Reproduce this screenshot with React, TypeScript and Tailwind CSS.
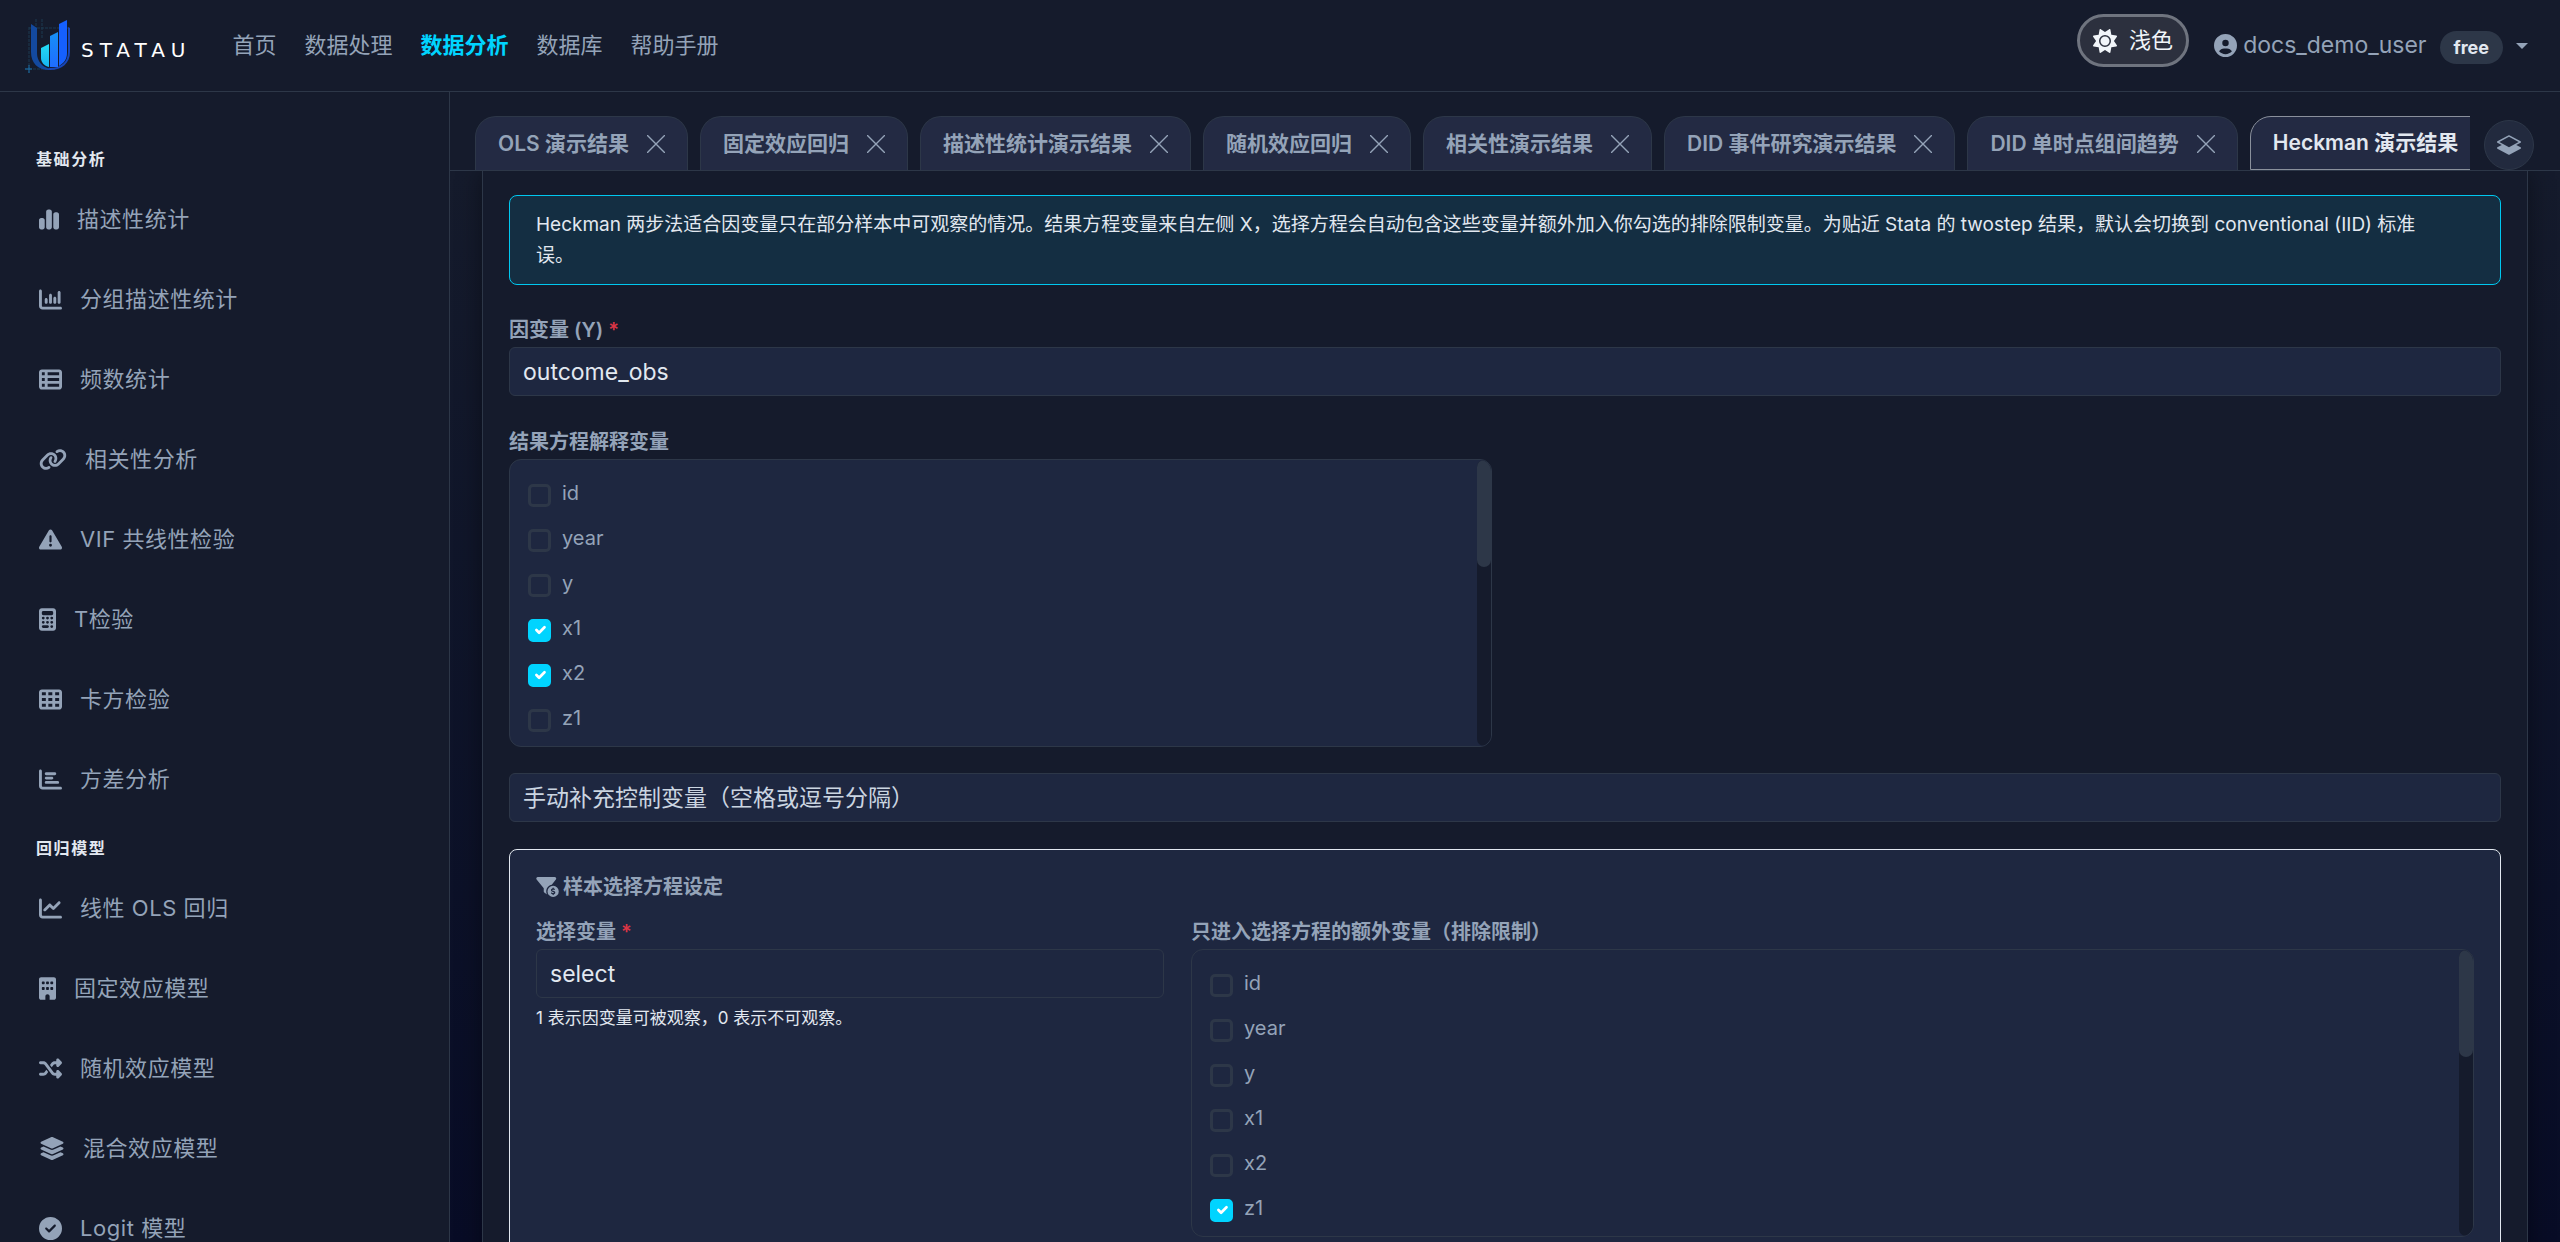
import type { ReactNode } from "react";
import type { IconType } from "react-icons";
import {
  FaBuilding,
  FaCalculator,
  FaChartBar,
  FaChartColumn,
  FaChartLine,
  FaChartSimple,
  FaCircleCheck,
  FaCircleUser,
  FaFilterCircleDollar,
  FaLayerGroup,
  FaLink,
  FaShuffle,
  FaSun,
  FaTableCells,
  FaTableList,
  FaTriangleExclamation,
} from "react-icons/fa6";
import { BsLayersHalf } from "react-icons/bs";

interface MenuItem {
  label: string;
  icon: IconType;
  width: string;
}

interface MenuGroup {
  title: string;
  items: MenuItem[];
}

const navLinks = ["首页", "数据处理", "数据分析", "数据库", "帮助手册"];
const activeNav = "数据分析";

// 图标宽度随各自的 viewBox 比例变化
const menuGroups: MenuGroup[] = [
  {
    title: "基础分析",
    items: [
      { label: "描述性统计", icon: FaChartSimple, width: "w-[20px]" },
      { label: "分组描述性统计", icon: FaChartColumn, width: "w-[23px]" },
      { label: "频数统计", icon: FaTableList, width: "w-[23px]" },
      { label: "相关性分析", icon: FaLink, width: "w-[28px]" },
      { label: "VIF 共线性检验", icon: FaTriangleExclamation, width: "w-[23px]" },
      { label: "T检验", icon: FaCalculator, width: "w-[17px]" },
      { label: "卡方检验", icon: FaTableCells, width: "w-[23px]" },
      { label: "方差分析", icon: FaChartBar, width: "w-[23px]" },
    ],
  },
  {
    title: "回归模型",
    items: [
      { label: "线性 OLS 回归", icon: FaChartLine, width: "w-[23px]" },
      { label: "固定效应模型", icon: FaBuilding, width: "w-[17px]" },
      { label: "随机效应模型", icon: FaShuffle, width: "w-[23px]" },
      { label: "混合效应模型", icon: FaLayerGroup, width: "w-[26px]" },
      { label: "Logit 模型", icon: FaCircleCheck, width: "w-[23px]" },
    ],
  },
];

const tabs = [
  "OLS 演示结果",
  "固定效应回归",
  "描述性统计演示结果",
  "随机效应回归",
  "相关性演示结果",
  "DID 事件研究演示结果",
  "DID 单时点组间趋势",
  "Heckman 演示结果",
];
const activeTab = "Heckman 演示结果";

const variables = ["id", "year", "y", "x1", "x2", "z1"];

function Logo() {
  return (
    <a href="#" className="flex items-center gap-2.5">
      <svg viewBox="0 0 46 54" className="h-[54px] w-[46px]" aria-hidden="true">
        <defs>
          <linearGradient id="barCyan" x1="0" y1="0" x2="0" y2="1">
            <stop offset="0" stopColor="#25dcf5" />
            <stop offset="1" stopColor="#16b4f2" />
          </linearGradient>
          <linearGradient id="barBlue" x1="0" y1="0" x2="0" y2="1">
            <stop offset="0" stopColor="#1790f5" />
            <stop offset="1" stopColor="#1f6cff" />
          </linearGradient>
        </defs>
        <path d="M4 8v46M0 50h30M11 0v20M17 0v20M4 9h40" stroke="#1c3a50" strokeDasharray="3 1" fill="none" />
        <path d="M6 5l6 4v25c0 8 5 14 13 16l-1 1C13 51 6 44 6 33z" fill="#13499f" />
        <path d="M43 8l2 1v24c0 11-8 18-20 18l-3-1 3-1c11 0 18-6 18-16z" fill="#1746b8" />
        <path d="M16 29l8-4v23c-5-1-8-5-8-9z" fill="url(#barCyan)" />
        <path d="M25 17l8-4v35h-8z" fill="url(#barBlue)" />
        <path d="M34 5l8-4v33c0 6-3 10-8 13z" fill="#1560ff" />
        <path d="M4 46v8M0 50h7" stroke="#1b6fa8" fill="none" />
      </svg>
      <span className="mt-[8px] font-['DejaVu_Sans',sans-serif] text-[20px] leading-none tracking-[0.3em] text-white">
        STATAU
      </span>
    </a>
  );
}

function Header() {
  return (
    <header className="flex h-[92px] shrink-0 items-center border-b border-[#2d3748] bg-[#151b2c] pr-8 pl-[25px]">
      <Logo />
      <nav className="mb-[2px] ml-[41px] flex gap-7 text-[22px] leading-[34px]">
        {navLinks.map((link) => (
          <a
            key={link}
            href="#"
            className={link === activeNav ? "font-semibold text-[#00d4ff]" : "text-[#94a3b8]"}
          >
            {link}
          </a>
        ))}
      </nav>
      <div className="ml-auto flex items-center">
        <button
          type="button"
          className="mb-[10px] flex h-[53px] items-center gap-3 rounded-full border-[3px] border-[#6f747f] bg-[#2c303e] px-[13px] text-[22px] text-[#f1f5f9]"
        >
          <FaSun className="h-6 w-6" />
          浅色
        </button>
        <button type="button" className="ml-[25px] flex items-center text-[23px] text-[#94a3b8]">
          <FaCircleUser className="h-[23px] w-[23px]" />
          <span className="ml-[6px]">docs_demo_user</span>
          <span className="mt-[4px] ml-[13px] rounded-full bg-[#2d3748] px-[14px] text-[18px] leading-[33px] font-bold text-[#e2e8f0]">
            free
          </span>
          <svg viewBox="0 0 12 6" className="ml-[13px] h-[6px] w-[12px]" fill="currentColor" aria-hidden="true">
            <path d="M0 0h12L6 6z" />
          </svg>
        </button>
      </div>
    </header>
  );
}

function Sidebar() {
  return (
    <aside className="w-[450px] shrink-0 overflow-hidden border-r border-[#2d3748] bg-[#151b2c] pt-[55px]">
      {menuGroups.map((group) => (
        <section key={group.title} className="mb-[17px]">
          <h2 className="px-9 text-[16px] leading-6 font-bold tracking-widest text-[#e2e8f0]">{group.title}</h2>
          <ul className="pt-2">
            {group.items.map(({ label, icon: Icon, width }) => (
              <li key={label}>
                <a href="#" className="flex h-20 items-center gap-[18px] px-[39px] text-[22px] tracking-wide text-[#94a3b8]">
                  <Icon className={`h-[23px] ${width}`} />
                  {label}
                </a>
              </li>
            ))}
          </ul>
        </section>
      ))}
    </aside>
  );
}

function CloseIcon() {
  return (
    <svg viewBox="0 0 18 18" className="h-[18px] w-[18px]" stroke="currentColor" strokeWidth="1.4" aria-hidden="true">
      <path d="M0 0l18 18M18 0L0 18" />
    </svg>
  );
}

function TabBar() {
  return (
    <div className="flex h-[79px] shrink-0 items-end border-b border-[#2d3748] bg-[#151b2c] pr-[26px] pl-[25px]">
      <div className="flex min-w-0 flex-1 gap-3 overflow-hidden">
        {tabs.map((tab) => (
          <div
            key={tab}
            className={
              tab === activeTab
                ? "flex h-[54px] shrink-0 items-center gap-[18px] rounded-t-[21px] border border-[#8a909c] bg-[#232a43] px-[22px] text-[#e2e8f0]"
                : "flex h-[54px] shrink-0 items-center gap-[18px] rounded-t-[21px] border border-b-0 border-[#2d3748] bg-[#232a43] px-[22px] text-[#94a3b8]"
            }
          >
            <button type="button" className="text-[21px] font-semibold whitespace-nowrap">
              {tab}
            </button>
            <button type="button" aria-label={`关闭 ${tab}`}>
              <CloseIcon />
            </button>
          </div>
        ))}
      </div>
      <button
        type="button"
        aria-label="全部标签"
        className="ml-[14px] flex h-[50px] w-[50px] items-center justify-center rounded-full border border-[#2d3748] bg-[#222a3e] text-[#94a3b8]"
      >
        <BsLayersHalf className="h-6 w-6" />
      </button>
    </div>
  );
}

function FieldLabel({ htmlFor, required, children }: { htmlFor?: string; required?: boolean; children: ReactNode }) {
  return (
    <label htmlFor={htmlFor} className="block text-[20px] leading-[34px] font-semibold text-[#94a3b8]">
      {children}
      {required && <span className="text-[#dc3545]"> *</span>}
    </label>
  );
}

function VariableList({ name, checked }: { name: string; checked: string[] }) {
  return (
    <div className="flex h-[288px] overflow-hidden rounded-xl border border-[#2d3748] bg-[#1e2740]">
      <ul className="min-w-0 flex-1 pt-3 pl-[18px]">
        {variables.map((variable) => (
          <li key={variable} className="h-[45px] pt-[6px]">
            <label className="flex items-center gap-[11px] text-[20px] leading-[30px] text-[#94a3b8]">
              <span className="relative mt-[4px] flex h-[23px] w-[23px]">
                <input
                  type="checkbox"
                  name={name}
                  value={variable}
                  defaultChecked={checked.includes(variable)}
                  className="peer h-[23px] w-[23px] appearance-none rounded-[5px] border-[3px] border-[#2d3748] checked:border-[#00d4ff] checked:bg-[#00d4ff]"
                />
                <svg
                  viewBox="0 0 20 20"
                  className="pointer-events-none absolute inset-0 m-auto hidden h-[18px] w-[18px] peer-checked:block"
                  fill="none"
                  stroke="#fff"
                  strokeWidth="3"
                  strokeLinecap="round"
                  strokeLinejoin="round"
                  aria-hidden="true"
                >
                  <path d="M6 10l3 3 6-6" />
                </svg>
              </span>
              {variable}
            </label>
          </li>
        ))}
      </ul>
      <div className="w-[14px] rounded-full bg-[#151b2c]">
        <div className="h-[107px] rounded-full bg-[#2d3748]" />
      </div>
    </div>
  );
}

const inputClass =
  "block h-[49px] w-full rounded-[6px] border border-[#2d3748] bg-[#1e2740] px-[13px] text-[23px] text-[#e2e8f0] placeholder:text-[#cbd5e1] outline-none";

function HeckmanForm() {
  return (
    <form className="mx-8 grow border-x border-[#2d3748] bg-[#151b2c] px-[26px] pt-6 shadow-[0_0_24px_rgba(0,0,0,0.4)]">
      <p className="rounded-lg border border-[#00c8f0] bg-[#142e42] pt-[13px] pr-12 pb-[13px] pl-[26px] text-[19px] leading-[31px] text-[#e2e8f0]">
        Heckman 两步法适合因变量只在部分样本中可观察的情况。结果方程变量来自左侧
        X，选择方程会自动包含这些变量并额外加入你勾选的排除限制变量。为贴近 Stata 的 twostep 结果，默认会切换到
        conventional (IID) 标准误。
      </p>

      <div className="mt-[28px]">
        <FieldLabel htmlFor="outcome" required>
          因变量 (Y)
        </FieldLabel>
        <input id="outcome" type="text" defaultValue="outcome_obs" className={inputClass} />
      </div>

      <div className="mt-[29px] grid grid-cols-2 gap-[27px]">
        <div>
          <FieldLabel>结果方程解释变量</FieldLabel>
          <VariableList name="outcome-vars" checked={["x1", "x2"]} />
        </div>
      </div>

      <input
        type="text"
        aria-label="手动补充控制变量"
        placeholder="手动补充控制变量（空格或逗号分隔）"
        className={`${inputClass} mt-[26px]`}
      />

      {/* 样本选择方程 */}
      <section className="mt-[27px] h-[480px] rounded-lg border border-[#e2e8f0] bg-[#1e2740] px-[26px] pt-[22px]">
        <h3 className="flex items-center gap-1 text-[20px] leading-[30px] font-semibold text-[#94a3b8]">
          <FaFilterCircleDollar className="h-[20px] w-[23px]" />
          样本选择方程设定
        </h3>
        <div className="mt-[13px] grid grid-cols-3 gap-[27px]">
          <div>
            <FieldLabel htmlFor="selection" required>
              选择变量
            </FieldLabel>
            <input id="selection" type="text" defaultValue="select" className={inputClass} />
            <p className="mt-[7px] text-[17px] leading-[26px] text-[#e2e8f0]">1 表示因变量可被观察，0 表示不可观察。</p>
          </div>
          <div className="col-span-2">
            <FieldLabel>只进入选择方程的额外变量（排除限制）</FieldLabel>
            <VariableList name="selection-vars" checked={["z1"]} />
          </div>
        </div>
      </section>
    </form>
  );
}

export default function App() {
  return (
    <div className="flex h-screen flex-col overflow-hidden bg-[#0a0e27] font-[Inter,'Noto_Sans_CJK_SC',sans-serif]">
      <Header />
      <div className="flex min-h-0 flex-1">
        <Sidebar />
        <main className="flex min-w-0 flex-1 flex-col">
          <TabBar />
          <div className="flex min-h-0 flex-1 flex-col overflow-hidden bg-linear-to-b from-[#151b2c] to-[#080c26]">
            <HeckmanForm />
          </div>
        </main>
      </div>
    </div>
  );
}
